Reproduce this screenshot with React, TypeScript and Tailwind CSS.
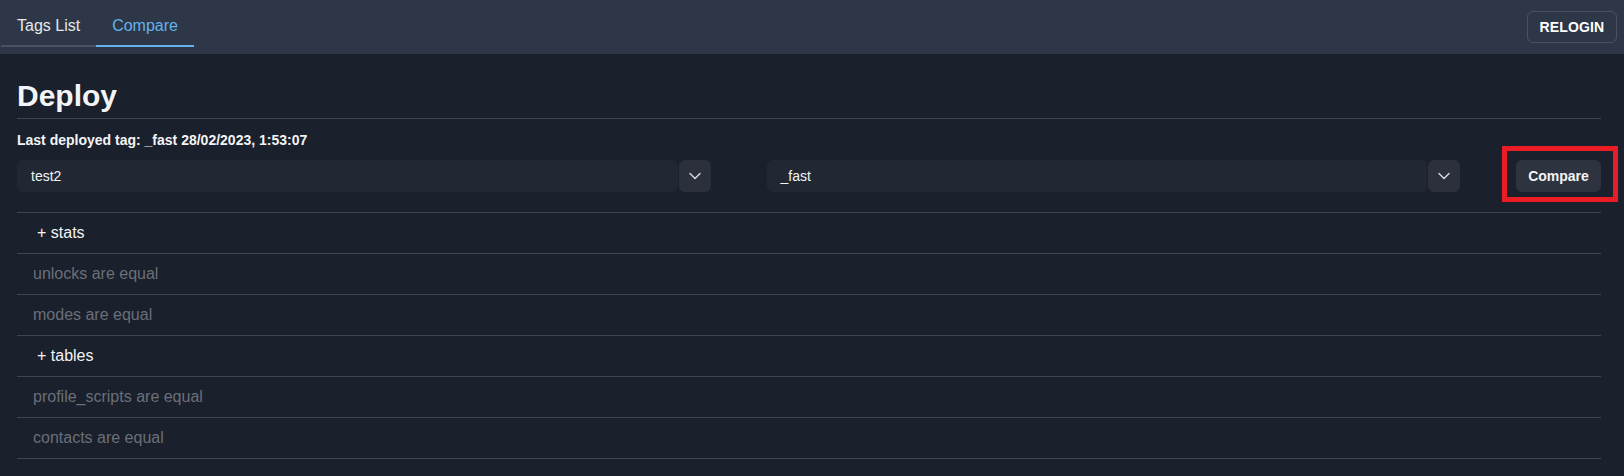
import React from "react";

const Chevron = () => (
  <svg width="14" height="14" viewBox="0 0 14 14" fill="none">
    <path d="M2 4.5 L7 9.5 L12 4.5" stroke="#d1d5db" strokeWidth="1.5" strokeLinecap="round" strokeLinejoin="round" />
  </svg>
);

const SelectBox = ({ value }: { value: string }) => (
  <div className="flex flex-1 h-8 gap-px">
    <div className="flex-1 h-8 bg-[#222833] rounded-md flex items-center pl-[14px] text-sm text-[#f3f4f6]">{value}</div>
    <div className="w-8 h-8 bg-[#2b303c] rounded-md flex items-center justify-center">
      <Chevron />
    </div>
  </div>
);

const rows: { text: string; group: boolean }[] = [
  { text: "stats", group: true },
  { text: "unlocks are equal", group: false },
  { text: "modes are equal", group: false },
  { text: "tables", group: true },
  { text: "profile_scripts are equal", group: false },
  { text: "contacts are equal", group: false },
];

export default function App() {
  return (
    <div className="min-h-screen bg-[#1a202c] font-['Liberation_Sans',Arial,sans-serif]">
      <header className="h-[54px] bg-[#2d3748] flex items-center justify-between pr-[7px]">
        <div className="flex ml-px mt-[-1px] border-b-2 border-[#4a5260]">
          <div className="px-4 h-10 flex items-center text-base text-[#e5e7eb] border-b-2 border-transparent -mb-[2px]">Tags List</div>
          <div className="px-4 h-10 flex items-center text-base text-[#63b3ed] border-b-2 border-[#63b3ed] -mb-[2px]">Compare</div>
        </div>
        <button className="h-8 w-[90px] rounded-md border border-[#4a5162] text-sm font-bold text-white tracking-[0.01em]">RELOGIN</button>
      </header>
      <main className="pl-[17px] pr-[23px]">
        <h1 className="pt-6 text-3xl leading-9 font-bold text-[#f3f4f6] pb-1 border-b border-[#3f444e]">Deploy</h1>
        <div className="mt-[11px] text-sm leading-5 font-bold text-[#f3f4f6]">Last deployed tag: _fast 28/02/2023, 1:53:07</div>
        <div className="mt-[10px] flex items-center gap-[56px]">
          <SelectBox value="test2" />
          <SelectBox value="_fast" />
          <div className="relative">
            <button className="h-8 w-[85px] rounded-md bg-[#2e3340] text-sm font-bold text-[#f3f4f6]">Compare</button>
            <div className="absolute -left-[14px] -top-[14px] -right-[17px] -bottom-[10px] border-[5px] border-[#ec1c24] pointer-events-none" />
          </div>
        </div>
        <div className="mt-5 border-t border-[#3f444e]">
          {rows.map((r) => (
            <div key={r.text} className="h-[41px] border-b border-[#3f444e] flex items-center">
              {r.group ? (
                <span className="pl-5 text-base text-[#f3f4f6]">+ {r.text}</span>
              ) : (
                <span className="pl-4 text-base text-[#6b6f78]">{r.text}</span>
              )}
            </div>
          ))}
        </div>
      </main>
    </div>
  );
}
